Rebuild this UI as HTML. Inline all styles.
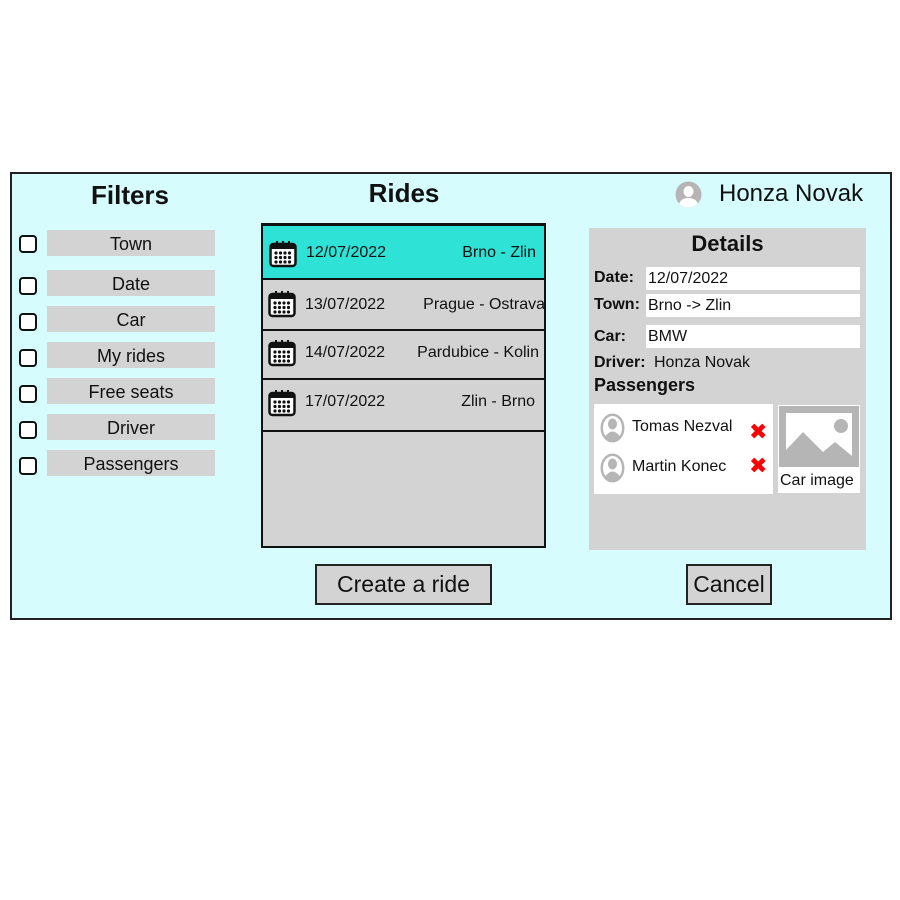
<!DOCTYPE html>
<html><head><style>
*{box-sizing:border-box;margin:0;padding:0}
body{width:900px;height:900px;background:#fff;font-family:"Liberation Sans","DejaVu Sans",sans-serif;position:relative;overflow:hidden;color:#111}
.a{position:absolute}
.main{left:10px;top:172px;width:882px;height:448px;background:#d6fcfd;border:2px solid #222}
.lbl{left:47px;width:168px;height:26px;background:#d3d3d3;font-size:18px;text-align:center;line-height:28px}
.cb{left:19px;width:18px;height:18px;border:2px solid #111;border-radius:4px;background:#fff}
.row{left:262px;width:283px;font-size:16px;border-bottom:2px solid #111}
.row .d{position:absolute;left:43px}
.row .r{position:absolute;right:8px}
.row svg{position:absolute;left:6px}
.fb{left:646px;width:214px;height:23px;background:#fff;font-size:16px;line-height:23px;padding-left:2px}
.fl{left:594px;font-size:16px;font-weight:bold}
.btn{background:#d3d3d3;border:2px solid #222;font-size:23px;text-align:center;line-height:36px}
</style></head><body>
<div class="a main"></div>
<div class="a" style="left:60px;top:180px;width:140px;text-align:center;font-size:26px;font-weight:bold">Filters</div>
<div class="a" style="left:334px;top:178px;width:140px;text-align:center;font-size:26px;font-weight:bold">Rides</div>
<svg class="a" style="left:675px;top:181px" width="27" height="27" viewBox="0 0 27 27"><defs><clipPath id="uc"><circle cx="13.5" cy="13.5" r="13"/></clipPath></defs><circle cx="13.5" cy="13.5" r="13" fill="#b5b5b5"/><g clip-path="url(#uc)" fill="#fff"><ellipse cx="13.5" cy="10.5" rx="5" ry="5.5"/><path d="M3 27 Q4 17 13.5 17 Q23 17 24 27Z"/></g></svg>
<div class="a" style="left:719px;top:180px;font-size:24px">Honza Novak</div>

<div class="a cb" style="top:235px"></div><div class="a lbl" style="top:230px">Town</div>
<div class="a cb" style="top:277px"></div><div class="a lbl" style="top:270px">Date</div>
<div class="a cb" style="top:313px"></div><div class="a lbl" style="top:306px">Car</div>
<div class="a cb" style="top:349px"></div><div class="a lbl" style="top:342px">My rides</div>
<div class="a cb" style="top:385px"></div><div class="a lbl" style="top:378px">Free seats</div>
<div class="a cb" style="top:421px"></div><div class="a lbl" style="top:414px">Driver</div>
<div class="a cb" style="top:457px"></div><div class="a lbl" style="top:450px">Passengers</div>

<div class="a" style="left:261px;top:223px;width:285px;height:325px;background:#d3d3d3;border:2px solid #111"></div>
<div class="a row" style="top:224px;height:56px;background:#2ee3d6;border:2px solid #111;left:261px;width:285px"><svg style="top:14px" width="28" height="28" viewBox="0 0 28 28"><rect x="1.5" y="4" width="25" height="22" rx="3" fill="#fff" stroke="#111" stroke-width="2.5"/><rect x="1.5" y="4" width="25" height="5" fill="#111"/><g fill="#111"><rect x="7" y="1" width="2" height="5"/><rect x="13" y="1" width="2" height="5"/><rect x="19" y="1" width="2" height="5"/></g><g fill="#111"><circle cx="7" cy="13" r="1.6"/><circle cx="11.5" cy="13" r="1.6"/><circle cx="16" cy="13" r="1.6"/><circle cx="20.5" cy="13" r="1.6"/><circle cx="7" cy="17.5" r="1.6"/><circle cx="11.5" cy="17.5" r="1.6"/><circle cx="16" cy="17.5" r="1.6"/><circle cx="20.5" cy="17.5" r="1.6"/><circle cx="7" cy="22" r="1.6"/><circle cx="11.5" cy="22" r="1.6"/><circle cx="16" cy="22" r="1.6"/><circle cx="20.5" cy="22" r="1.6"/></g></svg><span class="d" style="top:18px">12/07/2022</span><span class="r" style="top:18px">Brno - Zlin</span></div>
<div class="a row" style="top:280px;height:51px"><svg style="top:10px" width="28" height="28" viewBox="0 0 28 28"><rect x="1.5" y="4" width="25" height="22" rx="3" fill="#fff" stroke="#111" stroke-width="2.5"/><rect x="1.5" y="4" width="25" height="5" fill="#111"/><g fill="#111"><rect x="7" y="1" width="2" height="5"/><rect x="13" y="1" width="2" height="5"/><rect x="19" y="1" width="2" height="5"/><circle cx="7" cy="13" r="1.6"/><circle cx="11.5" cy="13" r="1.6"/><circle cx="16" cy="13" r="1.6"/><circle cx="20.5" cy="13" r="1.6"/><circle cx="7" cy="17.5" r="1.6"/><circle cx="11.5" cy="17.5" r="1.6"/><circle cx="16" cy="17.5" r="1.6"/><circle cx="20.5" cy="17.5" r="1.6"/><circle cx="7" cy="22" r="1.6"/><circle cx="11.5" cy="22" r="1.6"/><circle cx="16" cy="22" r="1.6"/><circle cx="20.5" cy="22" r="1.6"/></g></svg><span class="d" style="top:16px">13/07/2022</span><span class="r" style="top:16px;right:0">Prague - Ostrava</span></div>
<div class="a row" style="top:331px;height:49px"><svg style="top:8px" width="28" height="28" viewBox="0 0 28 28"><rect x="1.5" y="4" width="25" height="22" rx="3" fill="#fff" stroke="#111" stroke-width="2.5"/><rect x="1.5" y="4" width="25" height="5" fill="#111"/><g fill="#111"><rect x="7" y="1" width="2" height="5"/><rect x="13" y="1" width="2" height="5"/><rect x="19" y="1" width="2" height="5"/><circle cx="7" cy="13" r="1.6"/><circle cx="11.5" cy="13" r="1.6"/><circle cx="16" cy="13" r="1.6"/><circle cx="20.5" cy="13" r="1.6"/><circle cx="7" cy="17.5" r="1.6"/><circle cx="11.5" cy="17.5" r="1.6"/><circle cx="16" cy="17.5" r="1.6"/><circle cx="20.5" cy="17.5" r="1.6"/><circle cx="7" cy="22" r="1.6"/><circle cx="11.5" cy="22" r="1.6"/><circle cx="16" cy="22" r="1.6"/><circle cx="20.5" cy="22" r="1.6"/></g></svg><span class="d" style="top:13px">14/07/2022</span><span class="r" style="top:13px;right:6px">Pardubice - Kolin</span></div>
<div class="a row" style="top:380px;height:52px"><svg style="top:9px" width="28" height="28" viewBox="0 0 28 28"><rect x="1.5" y="4" width="25" height="22" rx="3" fill="#fff" stroke="#111" stroke-width="2.5"/><rect x="1.5" y="4" width="25" height="5" fill="#111"/><g fill="#111"><rect x="7" y="1" width="2" height="5"/><rect x="13" y="1" width="2" height="5"/><rect x="19" y="1" width="2" height="5"/><circle cx="7" cy="13" r="1.6"/><circle cx="11.5" cy="13" r="1.6"/><circle cx="16" cy="13" r="1.6"/><circle cx="20.5" cy="13" r="1.6"/><circle cx="7" cy="17.5" r="1.6"/><circle cx="11.5" cy="17.5" r="1.6"/><circle cx="16" cy="17.5" r="1.6"/><circle cx="20.5" cy="17.5" r="1.6"/><circle cx="7" cy="22" r="1.6"/><circle cx="11.5" cy="22" r="1.6"/><circle cx="16" cy="22" r="1.6"/><circle cx="20.5" cy="22" r="1.6"/></g></svg><span class="d" style="top:13px">17/07/2022</span><span class="r" style="top:13px;right:10px">Zlin - Brno</span></div>

<div class="a btn" style="left:315px;top:564px;width:177px;height:41px">Create a ride</div>
<div class="a btn" style="left:686px;top:564px;width:86px;height:41px">Cancel</div>

<div class="a" style="left:589px;top:228px;width:277px;height:322px;background:#d3d3d3"></div>
<div class="a" style="left:589px;top:231px;width:277px;text-align:center;font-size:22px;font-weight:bold">Details</div>
<div class="a fl" style="top:269px">Date:</div><div class="a fb" style="top:267px">12/07/2022</div>
<div class="a fl" style="top:296px">Town:</div><div class="a fb" style="top:294px">Brno -&gt; Zlin</div>
<div class="a fl" style="top:328px">Car:</div><div class="a fb" style="top:325px">BMW</div>
<div class="a fl" style="top:354px">Driver:</div><div class="a" style="left:654px;top:354px;font-size:16px">Honza Novak</div>
<div class="a" style="left:594px;top:375px;font-size:18px;font-weight:bold">Passengers</div>
<div class="a" style="left:594px;top:404px;width:179px;height:90px;background:#fff"></div>
<svg class="a" style="left:600px;top:413px" width="25" height="30" viewBox="0 0 25 30"><ellipse cx="12.5" cy="15" rx="12" ry="14.5" fill="#b5b5b5"/><ellipse cx="12.5" cy="15" rx="9.5" ry="12" fill="#fff"/><ellipse cx="12.5" cy="11" rx="4.5" ry="5.5" fill="#b5b5b5"/><path d="M4 25 Q12.5 12 21 25 Q12.5 30 4 25Z" fill="#b5b5b5"/></svg>
<svg class="a" style="left:600px;top:453px" width="25" height="30" viewBox="0 0 25 30"><ellipse cx="12.5" cy="15" rx="12" ry="14.5" fill="#b5b5b5"/><ellipse cx="12.5" cy="15" rx="9.5" ry="12" fill="#fff"/><ellipse cx="12.5" cy="11" rx="4.5" ry="5.5" fill="#b5b5b5"/><path d="M4 25 Q12.5 12 21 25 Q12.5 30 4 25Z" fill="#b5b5b5"/></svg>
<div class="a" style="left:632px;top:418px;font-size:16px">Tomas Nezval</div>
<div class="a" style="left:632px;top:458px;font-size:16px">Martin Konec</div>
<div class="a" style="left:749px;top:419px;color:#f00;font-size:22px;font-weight:bold">✖</div>
<div class="a" style="left:749px;top:453px;color:#f00;font-size:22px;font-weight:bold">✖</div>
<div class="a" style="left:778px;top:405px;width:82px;height:88px;background:#fff"></div>
<svg class="a" style="left:779px;top:406px" width="80" height="61" viewBox="0 0 80 61"><rect width="80" height="61" fill="#b5b5b5"/><rect x="7" y="7" width="66" height="46" fill="#fff"/><circle cx="62" cy="20" r="7" fill="#b5b5b5"/><path d="M7 53 L7 44 L24 26 L44 46 L56 36 L73 50 L73 53Z" fill="#b5b5b5"/></svg>
<div class="a" style="left:780px;top:472px;font-size:16px">Car image</div>
</body></html>
